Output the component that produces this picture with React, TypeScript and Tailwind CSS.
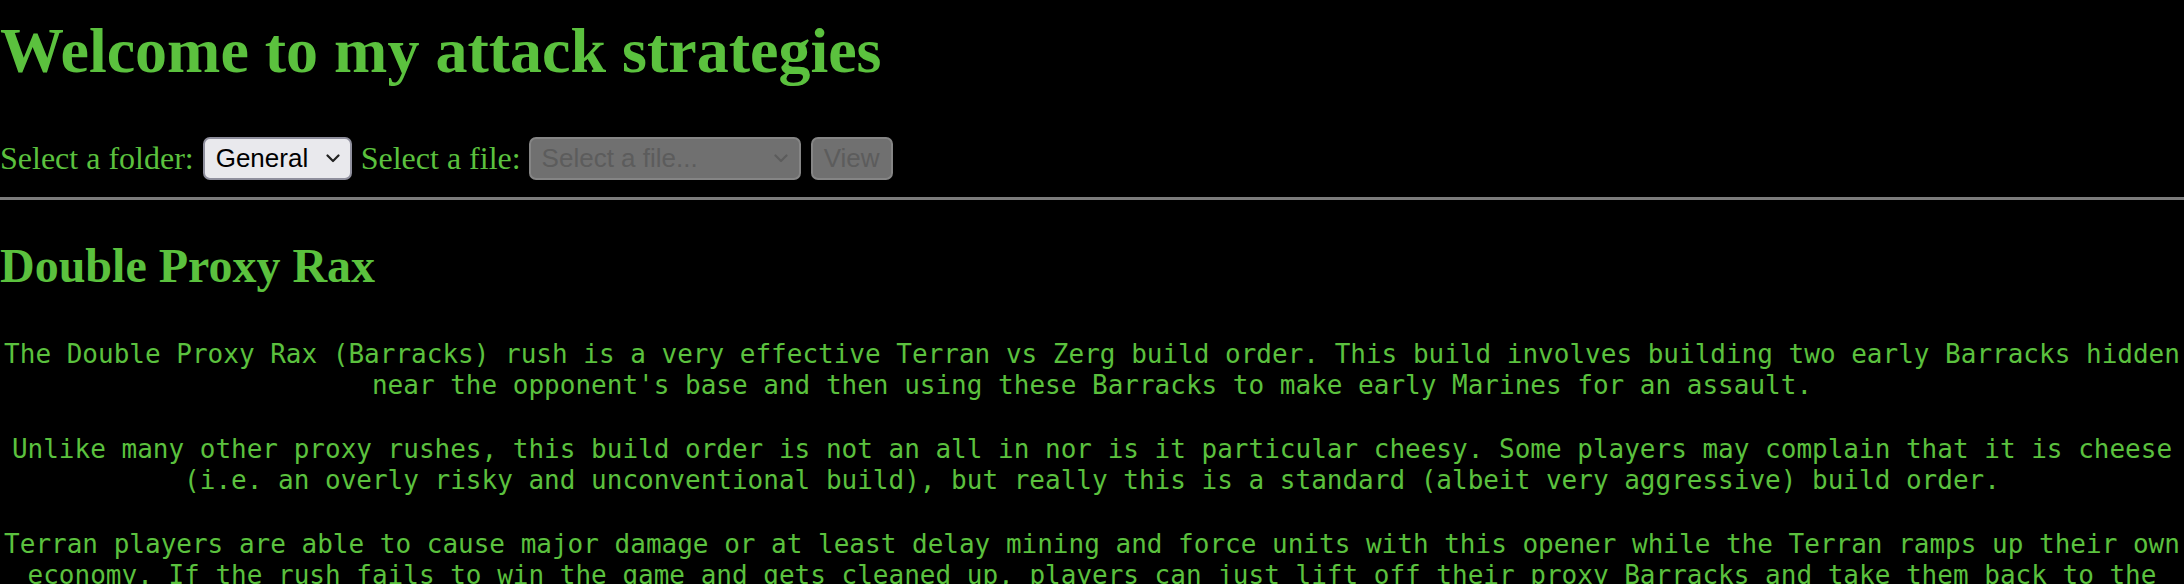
import React from "react";

function Chevron({ color }: { color: string }) {
  return (
    <svg width="14" height="9" viewBox="0 0 14 9" fill="none" className="shrink-0">
      <path d="M1.5 1.5 L7 7 L12.5 1.5" stroke={color} strokeWidth="2.2" strokeLinecap="round" strokeLinejoin="round" />
    </svg>
  );
}

export default function App() {
  return (
    <div className="min-h-[584px] w-full overflow-hidden bg-black text-[#5bc13e]">
      <h1 className="mt-[15px] whitespace-nowrap font-['Liberation_Serif','Times_New_Roman',serif] text-[64px] font-bold leading-[71px]">
        Welcome to my attack strategies
      </h1>

      <div className="mt-[51px] flex h-[43px] items-center font-['Liberation_Serif','Times_New_Roman',serif]">
        <span className="mb-[2px] whitespace-nowrap text-[32px] leading-[36px]">Select a folder:</span>
        <div className="ml-[9px] flex h-[43px] w-[149px] items-center justify-between rounded-[7px] border-2 border-[#8f8f9d] bg-[#e9e9ed] pl-[11px] pr-[10px] font-['Liberation_Sans',Arial,sans-serif] text-[26px] text-black">
          <span>General</span>
          <Chevron color="#222" />
        </div>
        <span className="mb-[2px] ml-[9px] whitespace-nowrap text-[32px] leading-[36px]">Select a file:</span>
        <div className="ml-[8px] flex h-[43px] w-[272px] items-center justify-between rounded-[7px] border-2 border-[#858585] bg-[#707070] pl-[11px] pr-[11px] font-['Liberation_Sans',Arial,sans-serif] text-[26px] text-[#5c5c5c]">
          <span className="whitespace-nowrap">Select a file...</span>
          <Chevron color="#5c5c5c" />
        </div>
        <div className="ml-[10px] flex h-[43px] w-[82px] items-center justify-center rounded-[7px] border-2 border-[#858585] bg-[#707070] font-['Liberation_Sans',Arial,sans-serif] text-[26px] text-[#5c5c5c]">
          View
        </div>
      </div>

      <div className="mt-[17px] h-[3px] w-full bg-[#7c7c7c]" />

      <h2 className="mt-[38px] whitespace-nowrap font-['Liberation_Serif','Times_New_Roman',serif] text-[48px] font-bold leading-[55px]">
        Double Proxy Rax
      </h2>

      <div className="mt-[46px] flex flex-col gap-[33px] text-center font-['DejaVu_Sans_Mono','Liberation_Mono',monospace] text-[26px] leading-[31px]">
        <p>
          The Double Proxy Rax (Barracks) rush is a very effective Terran vs Zerg build order. This build involves building two early Barracks hidden near the opponent's base and then using these Barracks to make early Marines for an assault.
        </p>
        <p>
          Unlike many other proxy rushes, this build order is not an all in nor is it particular cheesy. Some players may complain that it is cheese (i.e. an overly risky and unconventional build), but really this is a standard (albeit very aggressive) build order.
        </p>
        <p>
          Terran players are able to cause major damage or at least delay mining and force units with this opener while the Terran ramps up their own economy. If the rush fails to win the game and gets cleaned up, players can just lift off their proxy Barracks and take them back to the main base to continue with a standard game.
        </p>
      </div>
    </div>
  );
}
